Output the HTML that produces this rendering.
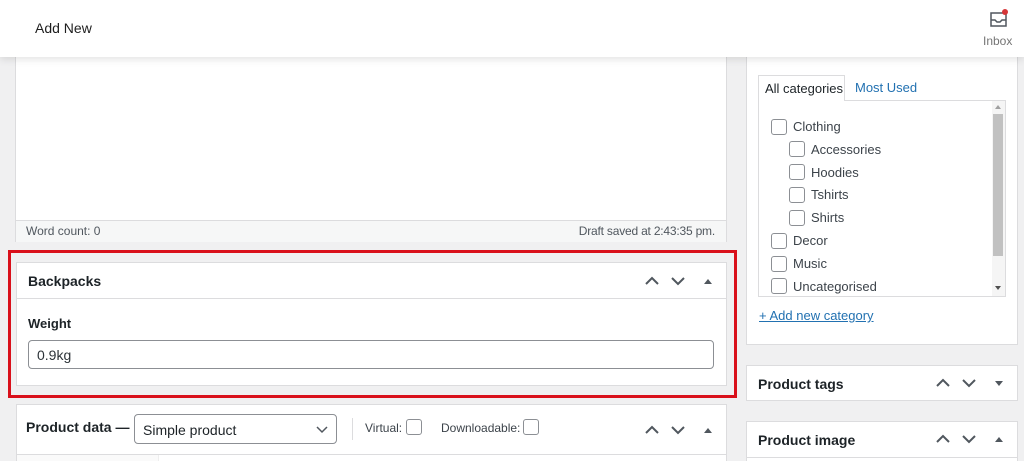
<!DOCTYPE html><html style="margin:0;width:1024px;height:461px;overflow:hidden"><head><style>
body{margin:0;width:1024px;height:461px;background:#f0f0f1;font-family:"Liberation Sans",sans-serif;position:relative;overflow:hidden;color:#1d2327}
.a{position:absolute}
.box{position:absolute;background:#fff;border:1px solid #dcdcde;box-sizing:border-box}
.cb{position:absolute;width:14px;height:14px;border:1px solid #8c8f94;border-radius:3px;background:#fff}
.lbl{position:absolute;font-size:13px;color:#3c434a}
</style></head><body>
<div class="box" style="left:15px;top:40px;width:712px;height:202px"></div>
<div class="a" style="left:16px;top:220px;width:710px;height:21px;background:#f6f7f7;border-top:1px solid #dcdcde"></div>
<div class="a" style="left:26px;top:224px;font-size:12px;color:#50575e">Word count: 0</div>
<div class="a" style="right:309px;top:224px;font-size:12px;color:#50575e;letter-spacing:-0.2px">Draft saved at 2:43:35 pm.</div>

<div class="a" style="left:8px;top:250px;width:723px;height:142px;border:3px solid #d9101b"></div>
<div class="box" style="left:16px;top:262px;width:711px;height:124px"></div>
<div class="a" style="left:17px;top:298px;width:709px;height:1px;background:#dcdcde"></div>
<div class="a" style="left:28px;top:273px;font-size:14px;font-weight:600">Backpacks</div>
<svg class="a" style="left:644px;top:274px" width="72" height="14"><path d="M2 10 L8 4 L14 10 M28 4 L34 10 L40 4" fill="none" stroke="#50575e" stroke-width="2"/><path d="M60 10 L64 5 L68 10Z" fill="#50575e"/></svg>
<div class="a" style="left:28px;top:316px;font-size:13px;font-weight:bold">Weight</div>
<div class="a" style="left:28px;top:340px;width:686px;height:29px;border:1px solid #8c8f94;border-radius:4px;box-sizing:border-box;font-size:14px;padding:6px 8px;color:#2c3338">0.9kg</div>

<div class="box" style="left:16px;top:404px;width:711px;height:70px"></div>
<div class="a" style="left:17px;top:454px;width:709px;height:1px;background:#dcdcde"></div>
<div class="a" style="left:17px;top:455px;width:141px;height:10px;background:#fafafa;border-right:1px solid #eee"></div>
<div class="a" style="left:26px;top:419px;font-size:14px;font-weight:600">Product data —</div>
<div class="a" style="left:134px;top:414px;width:203px;height:30px;border:1px solid #8c8f94;border-radius:4px;box-sizing:border-box;font-size:14px;padding:7px 8px">Simple product</div>
<svg class="a" style="left:316px;top:425px" width="12" height="10"><path d="M1 2 L6 7 L11 2" fill="none" stroke="#50575e" stroke-width="1.5"/></svg>
<div class="a" style="left:352px;top:418px;width:1px;height:22px;background:#dcdcde"></div>
<div class="a" style="left:365px;top:421px;font-size:12px;color:#3c434a">Virtual:</div>
<div class="cb" style="left:406px;top:419px"></div>
<div class="a" style="left:441px;top:421px;font-size:12px;color:#3c434a">Downloadable:</div>
<div class="cb" style="left:523px;top:419px"></div>
<svg class="a" style="left:644px;top:423px" width="72" height="14"><path d="M2 10 L8 4 L14 10 M28 4 L34 10 L40 4" fill="none" stroke="#50575e" stroke-width="2"/><path d="M60 10 L64 5 L68 10Z" fill="#50575e"/></svg>

<div class="box" style="left:746px;top:40px;width:272px;height:305px"></div>
<div class="a" style="left:758px;top:75px;width:87px;height:26px;border:1px solid #dcdcde;border-bottom:none;background:#fff;box-sizing:border-box;font-size:13px;padding:5px 0 0 6px;z-index:2">All categories</div>
<div class="a" style="left:855px;top:80px;font-size:13px;color:#2271b1">Most Used</div>
<div class="a" style="left:758px;top:100px;width:248px;height:197px;border:1px solid #dcdcde;box-sizing:border-box"></div>
<div class="a" style="left:992px;top:101px;width:13px;height:195px;background:#f5f5f5"></div>
<div class="a" style="left:993px;top:114px;width:10px;height:142px;background:#c1c1c1"></div>
<svg class="a" style="left:994px;top:104px" width="8" height="6"><path d="M1 5 L4 1 L7 5Z" fill="#a0a0a0"/></svg>
<svg class="a" style="left:994px;top:285px" width="8" height="6"><path d="M1 1 L4 5 L7 1Z" fill="#505050"/></svg>
<div class="cb" style="left:771px;top:119px"></div><div class="lbl" style="left:793px;top:119px">Clothing</div>
<div class="cb" style="left:789px;top:141px"></div><div class="lbl" style="left:811px;top:142px">Accessories</div>
<div class="cb" style="left:789px;top:164px"></div><div class="lbl" style="left:811px;top:165px">Hoodies</div>
<div class="cb" style="left:789px;top:187px"></div><div class="lbl" style="left:811px;top:187px">Tshirts</div>
<div class="cb" style="left:789px;top:210px"></div><div class="lbl" style="left:811px;top:210px">Shirts</div>
<div class="cb" style="left:771px;top:233px"></div><div class="lbl" style="left:793px;top:233px">Decor</div>
<div class="cb" style="left:771px;top:256px"></div><div class="lbl" style="left:793px;top:256px">Music</div>
<div class="cb" style="left:771px;top:278px"></div><div class="lbl" style="left:793px;top:279px">Uncategorised</div>
<div class="a" style="left:759px;top:308px;font-size:13px;color:#2271b1;text-decoration:underline">+ Add new category</div>

<div class="box" style="left:746px;top:365px;width:272px;height:36px"></div>
<div class="a" style="left:758px;top:376px;font-size:14px;font-weight:600">Product tags</div>
<svg class="a" style="left:935px;top:376px" width="72" height="14"><path d="M2 10 L8 4 L14 10 M28 4 L34 10 L40 4" fill="none" stroke="#50575e" stroke-width="2"/><path d="M60 5 L64 10 L68 5Z" fill="#50575e"/></svg>
<div class="box" style="left:746px;top:421px;width:272px;height:60px"></div>
<div class="a" style="left:747px;top:457px;width:270px;height:1px;background:#dcdcde"></div>
<div class="a" style="left:758px;top:432px;font-size:14px;font-weight:600">Product image</div>
<svg class="a" style="left:935px;top:432px" width="72" height="14"><path d="M2 10 L8 4 L14 10 M28 4 L34 10 L40 4" fill="none" stroke="#50575e" stroke-width="2"/><path d="M60 10 L64 5 L68 10Z" fill="#50575e"/></svg>

<div class="a" style="left:0;top:0;width:1024px;height:57px;background:#fff;box-shadow:0 2px 8px rgba(0,0,0,.12);z-index:5">
<div class="a" style="left:35px;top:20px;font-size:14px;color:#1e1e1e">Add New</div>
<svg class="a" style="left:988px;top:7px" width="22" height="22"><path d="M3 6 V19 H18 V6 Z M3 13 H7 L9 15 H12 L14 13 H18" fill="none" stroke="#50575e" stroke-width="1.5"/><circle cx="17" cy="5" r="3" fill="#d63638"/></svg>
<div class="a" style="left:983px;top:34px;font-size:12px;color:#757575">Inbox</div>
</div>
</body></html>
